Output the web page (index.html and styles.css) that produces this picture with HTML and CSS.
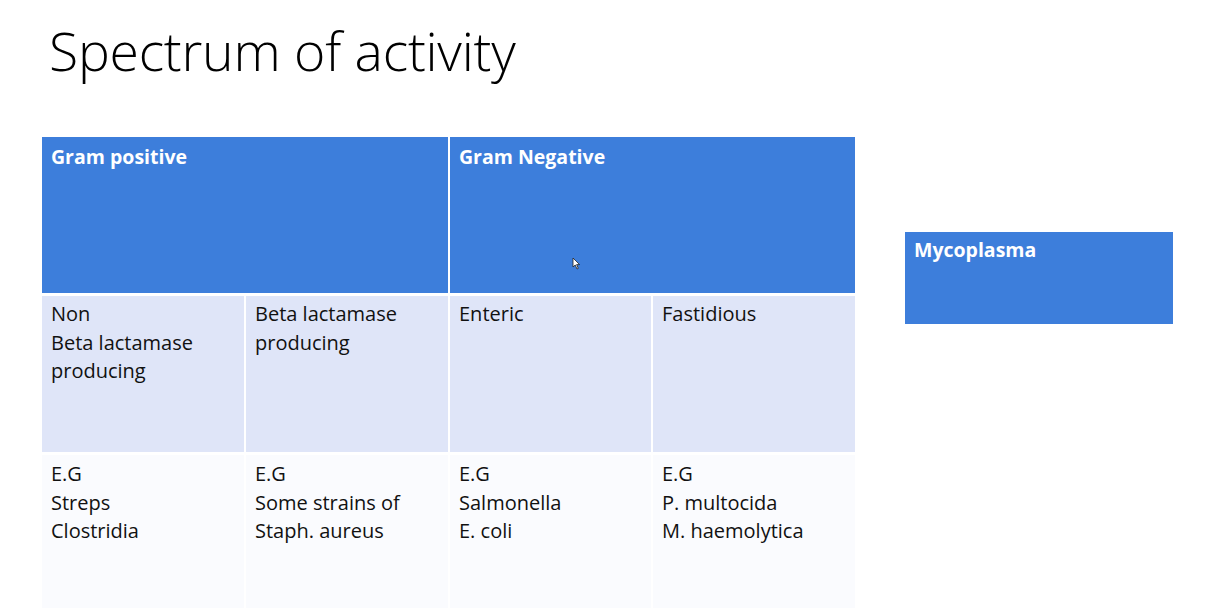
FILE: index.html
```html
<!DOCTYPE html>
<html lang="en">
<head>
    <meta charset="UTF-8">
    <title>Spectrum of activity</title>
    <link rel="stylesheet" href="styles.css">
</head>
<body>

<div class="slide">
    <h1 class="title">Spectrum of activity</h1>

    <div class="content">
        <!-- Main table -->
        <div class="spectrum">
            <div class="cell head wide">Gram positive</div>
            <div class="cell head wide">
                Gram Negative
                <svg class="cursor" width="9" height="13" viewBox="0 0 9 13">
                    <path d="M1 1 L1 10 L3.2 8 L5 12 L6.3 11.4 L4.6 7.6 L7.6 7.6 Z" fill="#fff" stroke="#222" stroke-width="0.8"/>
                </svg>
            </div>

            <div class="cell sub">Non<br>Beta lactamase<br>producing</div>
            <div class="cell sub">Beta lactamase<br>producing</div>
            <div class="cell sub">Enteric</div>
            <div class="cell sub">Fastidious</div>

            <div class="cell eg">E.G<br>Streps<br>Clostridia</div>
            <div class="cell eg">E.G<br>Some strains of<br>Staph. aureus</div>
            <div class="cell eg">E.G<br>Salmonella<br>E. coli</div>
            <div class="cell eg">E.G<br>P. multocida<br>M. haemolytica</div>
        </div>

        <!-- Side box -->
        <div class="side-box">Mycoplasma</div>
    </div>
</div>

</body>
</html>
```

FILE: styles.css
```css
body {
    margin: 0;
    padding: 0;
    background-color: #ffffff;
    font-family: "Open Sans", "Noto Sans", sans-serif;
    color: #111;
}
.slide {
    width: 1206px;
    height: 614px;
    overflow: hidden;
}
.title {
    margin: 0;
    padding: 15px 0 0 49px;
    font-size: 53.5px;
    font-weight: 300;
    line-height: 72px;
    letter-spacing: -0.25px;
    color: #000;
}
.content {
    display: flex;
    align-items: flex-start;
    gap: 50px;
    margin: 50px 0 0 42px;
}
.spectrum {
    display: grid;
    grid-template-columns: 202px 202px 201px 202px;
    grid-template-rows: 156px 156px 153px;
    column-gap: 2px;
    row-gap: 3px;
}
.cell {
    padding: 4px 9px;
    font-size: 20px;
    line-height: 28.5px;
}
.cell.wide {
    grid-column: span 2;
}
.head {
    position: relative;
    background-color: #3d7edb;
    color: #ffffff;
    font-size: 19.5px;
    font-weight: 700;
    padding-top: 6px;
}
.sub {
    background-color: #dfe5f8;
}
.eg {
    background-color: #fafbfe;
    padding-top: 5px;
}
.cursor {
    position: absolute;
    left: 122px;
    top: 120px;
}
.side-box {
    margin-top: 95px;
    width: 259px;
    height: 90px;
    padding: 2px 0 0 9px;
    background-color: #3d7edb;
    color: #ffffff;
    font-size: 19.5px;
    font-weight: 700;
    line-height: 32px;
}
```
